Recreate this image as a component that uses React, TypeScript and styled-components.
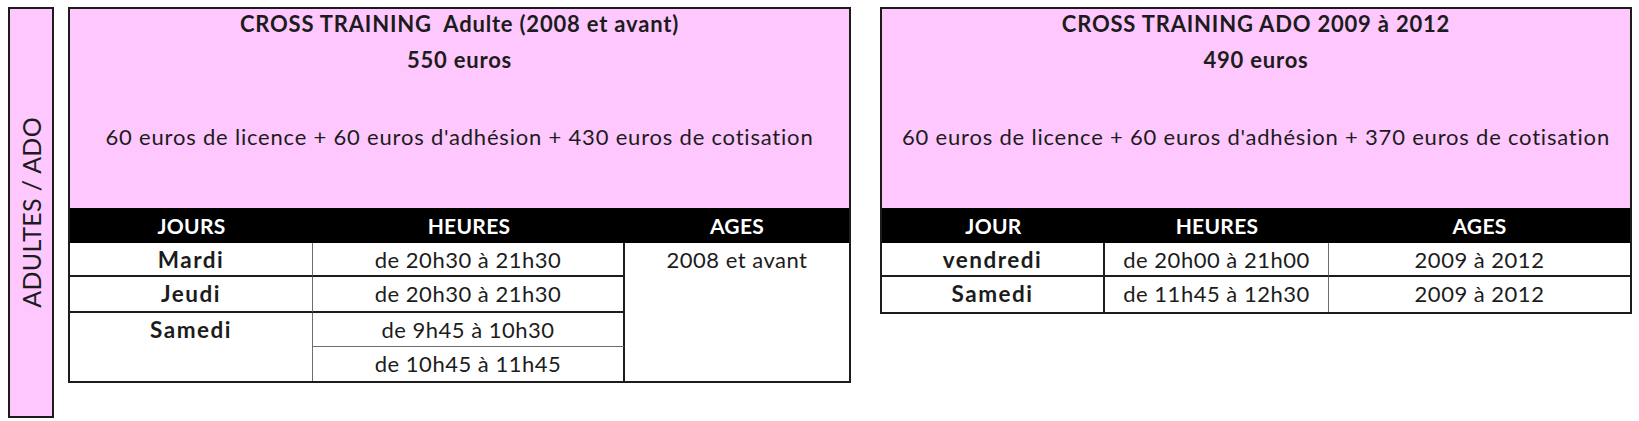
import React from "react";
import styled, { createGlobalStyle } from "styled-components";

const PINK = "#fec8fe";
const INK = "#1c1c1c";

const Global = createGlobalStyle`
  html, body { margin: 0; padding: 0; background: #ffffff; }
  body { font-family: Lato, "Open Sans", "Liberation Sans", sans-serif; color: ${INK}; }
  * { box-sizing: border-box; }
`;

const Page = styled.div`
  display: flex;
  align-items: flex-start;
  padding: 7px 0 0 8px;
`;

const SideLabel = styled.div`
  width: 46px;
  height: 411px;
  margin-right: 14px;
  border: 2px solid ${INK};
  background: ${PINK};
  display: flex;
  align-items: center;
  justify-content: center;
`;

const SideText = styled.span`
  writing-mode: vertical-rl;
  transform: rotate(180deg);
  font-size: 25px;
  line-height: 1;
  letter-spacing: 0.3px;
  white-space: nowrap;
`;

const Card = styled.div<{ $w: number; $mr?: number }>`
  width: ${(p) => p.$w}px;
  margin-right: ${(p) => p.$mr ?? 0}px;
  border: 2px solid ${INK};
  background: #fff;
`;

const PinkHead = styled.div`
  height: 199px;
  background: ${PINK};
  display: flex;
  flex-direction: column;
  align-items: center;
`;

const Title = styled.div`
  font-weight: 700;
  font-size: 22px;
  letter-spacing: 0.8px;
  line-height: 30px;
  white-space: pre;
`;

const Price = styled.div`
  font-weight: 700;
  font-size: 22px;
  letter-spacing: 0.8px;
  line-height: 30px;
  margin-top: 6px;
`;

const Desc = styled.div`
  font-size: 22px;
  letter-spacing: 0.8px;
  line-height: 30px;
  margin-top: 47px;
  white-space: nowrap;
`;

const Grid = styled.div<{ $cols: string; $rows: string }>`
  display: grid;
  grid-template-columns: ${(p) => p.$cols};
  grid-template-rows: ${(p) => p.$rows};
`;

const HeadRow = styled(Grid)`
  background: #000;
`;

const HeadCell = styled.div`
  color: #fff;
  font-weight: 700;
  font-size: 21px;
  letter-spacing: 0.3px;
  line-height: 35px;
  text-align: center;
`;

const Cell = styled.div<{
  $bold?: boolean;
  $right?: string;
  $bottom?: string;
  $col?: string;
  $row?: string;
}>`
  grid-column: ${(p) => p.$col ?? "auto"};
  grid-row: ${(p) => p.$row ?? "auto"};
  border-right: ${(p) => p.$right ?? "none"};
  border-bottom: ${(p) => p.$bottom ?? "none"};
  font-size: ${(p) => (p.$bold ? "22.5px" : "22px")};
  font-weight: ${(p) => (p.$bold ? 700 : 400)};
  letter-spacing: ${(p) => (p.$bold ? "1.5px" : "0.5px")};
  line-height: 24px;
  padding-top: 5px;
  text-align: center;
  white-space: nowrap;
`;

const DARK = `2px solid ${INK}`;
const GREY = "1px solid #6e6e6e";

export default function App() {
  return (
    <>
      <Global />
      <Page>
        <SideLabel>
          <SideText>ADULTES / ADO</SideText>
        </SideLabel>

        <Card $w={783} $mr={29}>
          <PinkHead>
            <Title>{"CROSS TRAINING  Adulte (2008 et avant)"}</Title>
            <Price>550 euros</Price>
            <Desc>60 euros de licence + 60 euros d'adhésion + 430 euros de cotisation</Desc>
          </PinkHead>
          <HeadRow $cols="243px 312px 1fr" $rows="35px">
            <HeadCell>JOURS</HeadCell>
            <HeadCell>HEURES</HeadCell>
            <HeadCell>AGES</HeadCell>
          </HeadRow>
          <Grid $cols="243px 312px 1fr" $rows="34px 36px 34px 34px">
            <Cell $bold $right={GREY} $bottom={DARK} $col="1" $row="1">Mardi</Cell>
            <Cell $right={DARK} $bottom={DARK} $col="2" $row="1">de 20h30 à 21h30</Cell>
            <Cell $col="3" $row="1 / span 4">2008 et avant</Cell>
            <Cell $bold $right={GREY} $bottom={DARK} $col="1" $row="2">Jeudi</Cell>
            <Cell $right={DARK} $bottom={DARK} $col="2" $row="2">de 20h30 à 21h30</Cell>
            <Cell $bold $right={GREY} $col="1" $row="3 / span 2">Samedi</Cell>
            <Cell $right={DARK} $bottom={GREY} $col="2" $row="3">de 9h45 à 10h30</Cell>
            <Cell $right={DARK} $col="2" $row="4">de 10h45 à 11h45</Cell>
          </Grid>
        </Card>

        <Card $w={752}>
          <PinkHead>
            <Title>CROSS TRAINING ADO 2009 à 2012</Title>
            <Price>490 euros</Price>
            <Desc>60 euros de licence + 60 euros d'adhésion + 370 euros de cotisation</Desc>
          </PinkHead>
          <HeadRow $cols="223px 224px 1fr" $rows="35px">
            <HeadCell>JOUR</HeadCell>
            <HeadCell>HEURES</HeadCell>
            <HeadCell>AGES</HeadCell>
          </HeadRow>
          <Grid $cols="223px 224px 1fr" $rows="34px 35px">
            <Cell $bold $right={DARK} $bottom={DARK}>vendredi</Cell>
            <Cell $right={GREY} $bottom={DARK}>de 20h00 à 21h00</Cell>
            <Cell $bottom={DARK}>2009 à 2012</Cell>
            <Cell $bold $right={DARK}>Samedi</Cell>
            <Cell $right={GREY}>de 11h45 à 12h30</Cell>
            <Cell>2009 à 2012</Cell>
          </Grid>
        </Card>
      </Page>
    </>
  );
}
